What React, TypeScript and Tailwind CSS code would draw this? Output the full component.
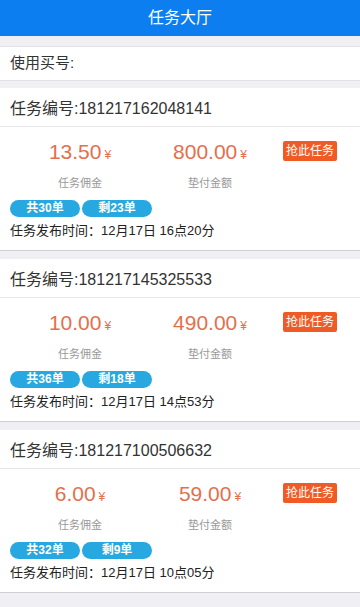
import React from "react";

type Task = { id: string; fee: string; pay: string; total: number; left: number; time: string };

const tasks: Task[] = [
  { id: "181217162048141", fee: "13.50", pay: "800.00", total: 30, left: 23, time: "12月17日 16点20分" },
  { id: "181217145325533", fee: "10.00", pay: "490.00", total: 36, left: 18, time: "12月17日 14点53分" },
  { id: "181217100506632", fee: "6.00", pay: "59.00", total: 32, left: 9, time: "12月17日 10点05分" },
];

const font = { fontFamily: '"Liberation Sans", "Noto Sans CJK SC", sans-serif' };

function Card({ t }: { t: Task }) {
  return (
    <div className="bg-white border-b border-[#cfcfcf] mb-2">
      <div className="h-[39px] flex items-center pt-[4px] px-[10px] text-[16px] text-[#333] border-b border-[#e6e6e6]">
        任务编号:{t.id}
      </div>
      <div className="pt-[12px] pb-[9px]">
        <div className="flex">
          <div className="w-[160px] flex flex-col items-center">
            <div className="h-[26px] flex items-end text-[#e46f4c]">
              <span className="text-[21px] leading-[26px]">{t.fee}</span>
              <span className="text-[12px] leading-[20px] ml-[3px]">¥</span>
            </div>
            <div className="mt-[10px] text-[11px] leading-[16px] text-[#999]">任务佣金</div>
          </div>
          <div className="w-[100px] flex flex-col items-center">
            <div className="h-[26px] flex items-end text-[#e46f4c]">
              <span className="text-[21px] leading-[26px]">{t.pay}</span>
              <span className="text-[12px] leading-[20px] ml-[3px]">¥</span>
            </div>
            <div className="mt-[10px] text-[11px] leading-[16px] text-[#999]">垫付金额</div>
          </div>
          <div className="w-[100px] flex justify-center">
            <div className="mt-[2px] w-[54px] h-[20px] bg-[#f05a24] rounded-[2px] text-white text-[12px] leading-[20px] text-center">
              抢此任务
            </div>
          </div>
        </div>
        <div className="flex gap-[2px] px-[10px] mt-[9px]">
          <div className="w-[70px] h-[17px] rounded-full bg-[#27a8e0] text-white text-[12px] font-bold leading-[17px] text-center">
            共{t.total}单
          </div>
          <div className="w-[70px] h-[17px] rounded-full bg-[#27a8e0] text-white text-[12px] font-bold leading-[17px] text-center">
            剩{t.left}单
          </div>
        </div>
        <div className="mt-[4px] px-[10px] text-[13px] leading-[20px] text-[#222]">
          任务发布时间：{t.time}
        </div>
      </div>
    </div>
  );
}

export default function App() {
  return (
    <div className="min-h-[607px] bg-[#efeff4]" style={font}>
      <div className="h-9 bg-[#0c7ef0] flex items-center justify-center text-white text-[16px]">任务大厅</div>
      <div className="mt-[10px] h-[35px] bg-white border-t border-[#e2e2e2] border-b border-[#c8c8c8] flex items-center px-[10px] text-[15px] text-[#333] mb-[7px]">
        使用买号:
      </div>
      {tasks.map((t) => (
        <Card key={t.id} t={t} />
      ))}
    </div>
  );
}
